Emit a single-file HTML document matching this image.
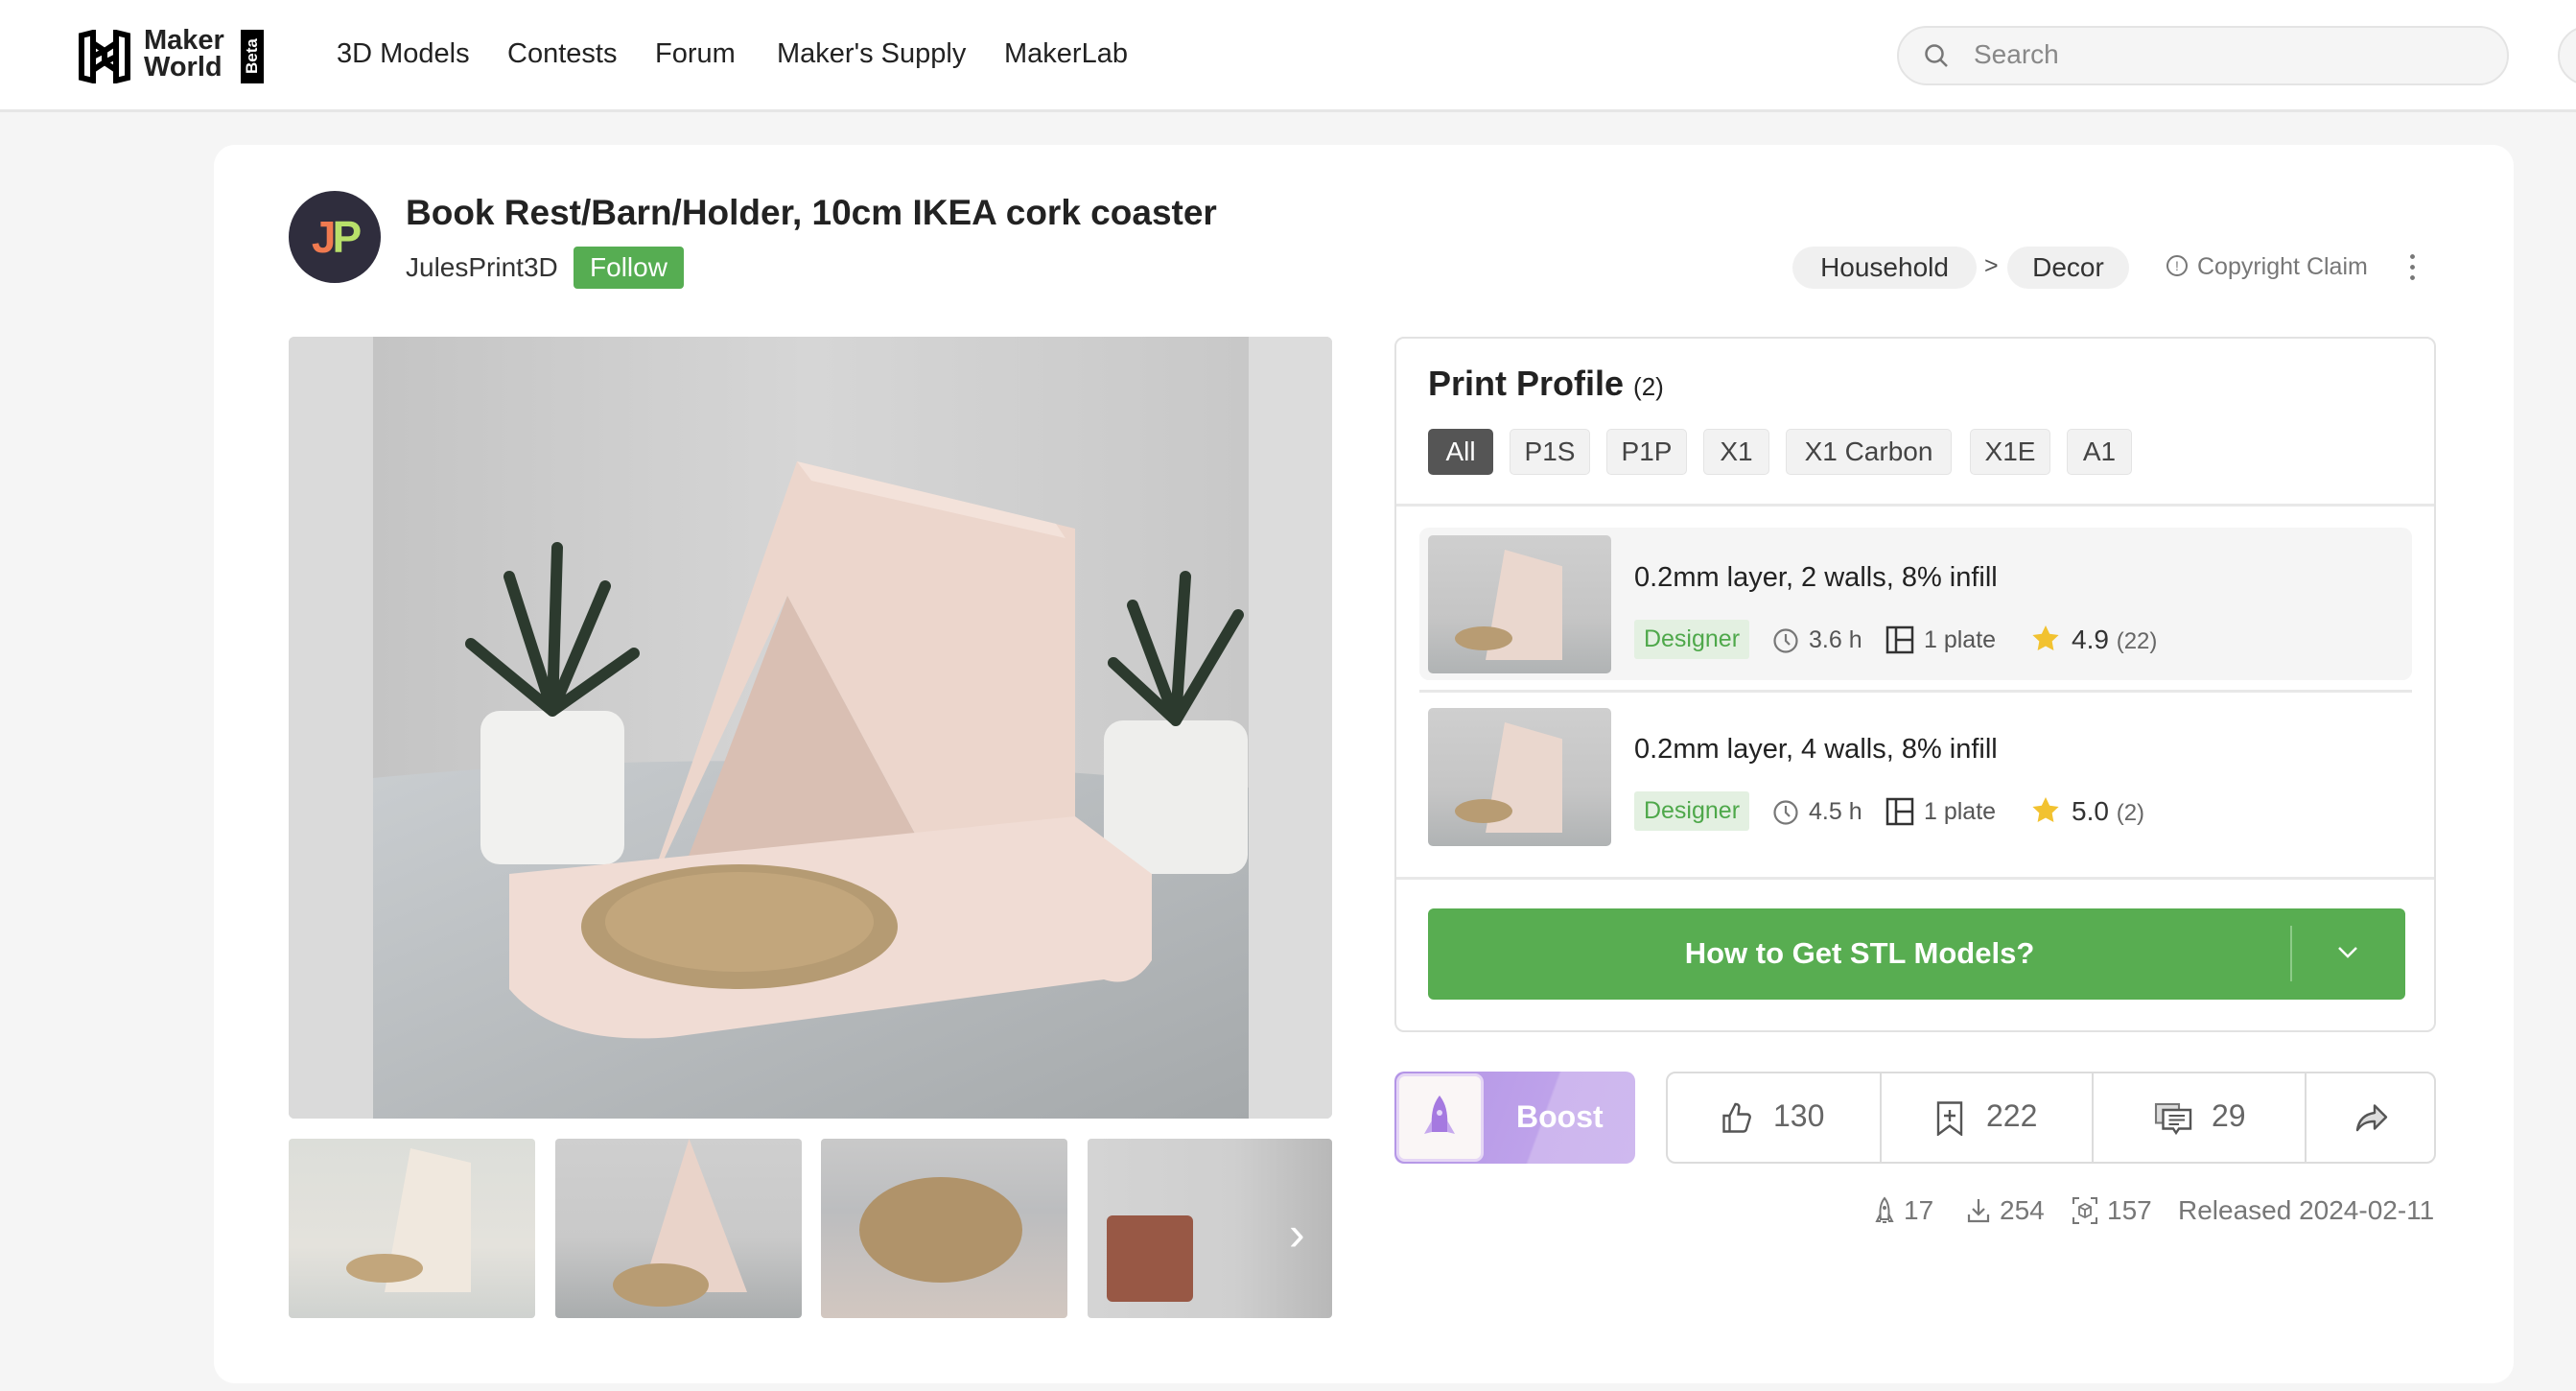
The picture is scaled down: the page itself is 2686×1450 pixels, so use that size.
<!DOCTYPE html>
<html><head><meta charset="utf-8"><style>
*{margin:0;padding:0;box-sizing:border-box}
body{width:2686px;height:1450px;background:#f5f5f5;font-family:"Liberation Sans",sans-serif;color:#222;position:relative;overflow:hidden}
.abs{position:absolute}
.hdr{left:0;top:0;width:2686px;height:117px;background:#fff;border-bottom:3px solid #e6e6e6}
.nav{top:40px;font-size:29px;color:#222}
.card{left:223px;top:151px;width:2398px;height:1291px;background:#fff;border-radius:22px}
.pill{background:#f0f0f0;border-radius:22px;font-size:28px;color:#333;text-align:center;line-height:44px;height:44px}
.tab{top:447px;height:48px;background:#f2f2f2;border:1px solid #e4e4e4;border-radius:5px;font-size:28px;line-height:46px;text-align:center;color:#444}
.meta{font-size:25px;color:#555}
.sep{background:#e8e8e8;height:3px}
.st{top:1246px;font-size:28px;color:#777}
</style></head><body>
<div class="abs hdr"></div>
<svg class="abs" style="left:79px;top:31px" width="60" height="56" viewBox="0 0 60 56"><g fill="none" stroke="#000" stroke-width="6"><path d="M6 6 L18 3 L18 53 L6 50Z M42 3 L54 6 L54 50 L42 53Z"/><path d="M18 14 L30 22 L42 14 M18 42 L30 34 L42 42 M30 22 L30 34 M18 28 L30 22 M42 28 L30 34"/></g></svg>
<div class="abs" style="left:150px;top:28px;font-size:29px;font-weight:bold;line-height:28px">Maker<br>World</div>
<div class="abs" style="left:251px;top:31px;width:24px;height:56px;background:#000;color:#fff;font-size:17px;font-weight:bold;writing-mode:vertical-rl;transform:rotate(180deg);text-align:center;line-height:24px">Beta</div>
<div class="abs nav" style="left:351px">3D Models</div>
<div class="abs nav" style="left:529px">Contests</div>
<div class="abs nav" style="left:683px">Forum</div>
<div class="abs nav" style="left:810px">Maker's Supply</div>
<div class="abs nav" style="left:1047px">MakerLab</div>
<div class="abs" style="left:1978px;top:27px;width:638px;height:62px;background:#f5f5f5;border:2px solid #e4e4e4;border-radius:31px"></div>
<svg class="abs" style="left:2005px;top:44px" width="28" height="28" viewBox="0 0 28 28"><circle cx="12" cy="12" r="8.5" fill="none" stroke="#777" stroke-width="2.5"/><path d="M18 18L25 25" stroke="#777" stroke-width="2.5"/></svg>
<div class="abs" style="left:2058px;top:41px;font-size:28px;color:#888">Search</div>
<div class="abs" style="left:2667px;top:27px;width:62px;height:62px;border:2px solid #e4e4e4;border-radius:31px;background:#f5f5f5"></div>

<div class="abs card"></div>
<div class="abs" style="left:301px;top:199px;width:96px;height:96px;border-radius:50%;background:#2f2d3d;color:#fff;font-size:46px;font-weight:bold;text-align:center;line-height:96px;letter-spacing:-4px"><span style="color:#f07a50">J</span><span style="color:#b8e06a">P</span></div>
<div class="abs" style="left:423px;top:201px;font-size:37px;font-weight:bold;color:#222">Book Rest/Barn/Holder, 10cm IKEA cork coaster</div>
<div class="abs" style="left:423px;top:263px;font-size:28px;color:#333">JulesPrint3D</div>
<div class="abs" style="left:598px;top:257px;width:115px;height:44px;background:#56ad52;border-radius:4px;color:#fff;font-size:28px;text-align:center;line-height:44px">Follow</div>
<div class="abs pill" style="left:1869px;top:257px;width:192px">Household</div>
<div class="abs" style="left:2069px;top:263px;font-size:25px;color:#555">&gt;</div>
<div class="abs pill" style="left:2093px;top:257px;width:127px">Decor</div>
<div class="abs" style="left:2259px;top:266px;width:22px;height:22px;border:2px solid #777;border-radius:50%;font-size:14px;text-align:center;line-height:18px;color:#777">!</div>
<div class="abs" style="left:2291px;top:264px;font-size:25px;color:#777">Copyright Claim</div>
<div class="abs" style="left:2513px;top:262px;width:5px;height:30px;background:radial-gradient(circle,#777 2.2px,transparent 2.6px) 0 0/5px 11px"></div>

<svg class="abs" style="left:301px;top:351px;border-radius:6px" width="1088" height="815" viewBox="0 0 1088 815" preserveAspectRatio="none">
<defs><linearGradient id="w" x1="0" x2="1"><stop offset="0" stop-color="#c4c4c4"/><stop offset=".5" stop-color="#d6d6d6"/><stop offset="1" stop-color="#c8c8c8"/></linearGradient>
<linearGradient id="t" y1="0" y2="1"><stop offset="0" stop-color="#c9cdd0"/><stop offset="1" stop-color="#a5a9ab"/></linearGradient></defs>
<rect width="1088" height="815" fill="#d0d0d0"/>
<rect x="88" width="913" height="815" fill="url(#w)"/>
<rect x="0" width="88" height="815" fill="#dadada"/><rect x="1001" width="87" height="815" fill="#dcdcdc"/>
<path d="M88 460 Q500 420 1001 470 L1001 815 L88 815Z" fill="url(#t)"/>
<rect x="200" y="390" width="150" height="160" rx="20" fill="#f1f1ef"/>
<rect x="850" y="400" width="150" height="160" rx="20" fill="#eeeeec"/>
<g stroke="#2c3a2e" stroke-width="12" stroke-linecap="round"><path d="M275 390 L230 250 M275 390 L280 220 M275 390 L330 260 M275 390 L190 320 M275 390 L360 330"/><path d="M925 400 L880 280 M925 400 L935 250 M925 400 L990 290 M925 400 L860 340"/></g>
<path d="M530 130 L820 200 L820 550 L670 550 L520 270 L370 590 Z" fill="#ecd6cc"/>
<path d="M530 130 L800 195 L810 210 L545 150Z" fill="#f3e2da"/>
<path d="M520 270 L670 550 L410 560Z" fill="#d9bfb3"/>
<path d="M230 560 L820 500 L900 560 L900 650 Q880 680 850 670 L400 730 Q280 740 230 680Z" fill="#f0dcd4"/>
<ellipse cx="470" cy="615" rx="165" ry="65" fill="#b59b73"/><ellipse cx="470" cy="610" rx="140" ry="52" fill="#c2a67c"/>
</svg>
<div class="abs" style="left:301px;top:1187px;width:257px;height:187px;border-radius:4px;background:linear-gradient(180deg,#dcded9 0%,#e4e2dc 60%,#cfd2cf 100%)"><div style="position:absolute;left:100px;top:10px;width:90px;height:150px;background:#f0e8de;clip-path:polygon(30% 0,100% 10%,100% 100%,0 100%)"></div><div style="position:absolute;left:60px;top:120px;width:80px;height:30px;border-radius:50%;background:#c2a67c"></div></div>
<div class="abs" style="left:579px;top:1187px;width:257px;height:187px;border-radius:4px;background:linear-gradient(180deg,#cfcfcf 0%,#c9c9c9 55%,#a9acad 100%)"><div style="position:absolute;left:90px;top:0;width:110px;height:160px;background:#e9d3c9;clip-path:polygon(45% 0,100% 100%,0 100%)"></div><div style="position:absolute;left:60px;top:130px;width:100px;height:45px;border-radius:50%;background:#b89c73"></div></div>
<div class="abs" style="left:856px;top:1187px;width:257px;height:187px;border-radius:4px;background:linear-gradient(180deg,#c9c9c9 0%,#bcbdbf 40%,#d2c7c0 100%)"><div style="position:absolute;left:40px;top:40px;width:170px;height:110px;border-radius:50%;background:#b0936a"></div></div>
<div class="abs" style="left:1134px;top:1187px;width:255px;height:187px;border-radius:4px;background:linear-gradient(90deg,#d4d4d4 0%,#cfcfcf 60%,#b8b8b8 100%)"><div style="position:absolute;left:20px;top:80px;width:90px;height:90px;background:#8a3a22;border-radius:6px;opacity:.8"></div><div style="position:absolute;left:210px;top:70px;color:#fff;font-size:50px">›</div></div>

<div class="abs" style="left:1454px;top:351px;width:1086px;height:725px;border:2px solid #e2e2e2;border-radius:10px"></div>
<div class="abs" style="left:1489px;top:379px;font-size:36px;font-weight:bold">Print Profile <span style="font-size:26px;font-weight:normal">(2)</span></div>
<div class="abs tab" style="left:1489px;width:68px;background:#555;color:#fff;border-color:#555">All</div>
<div class="abs tab" style="left:1574px;width:84px">P1S</div>
<div class="abs tab" style="left:1675px;width:84px">P1P</div>
<div class="abs tab" style="left:1776px;width:69px">X1</div>
<div class="abs tab" style="left:1862px;width:173px">X1 Carbon</div>
<div class="abs tab" style="left:2054px;width:84px">X1E</div>
<div class="abs tab" style="left:2155px;width:68px">A1</div>
<div class="abs sep" style="left:1456px;top:525px;width:1082px"></div>
<div class="abs" style="left:1480px;top:550px;width:1035px;height:159px;background:#f5f5f5;border-radius:10px"></div>
<div class="abs sep" style="left:1480px;top:719px;width:1035px"></div>
<div class="abs sep" style="left:1456px;top:914px;width:1082px"></div>

<div class="abs" style="left:1489px;top:558px;width:191px;height:144px;border-radius:5px;background:linear-gradient(180deg,#cfcfcf,#c5c5c5 60%,#b0b3b4)"><div style="position:absolute;left:60px;top:15px;width:80px;height:115px;background:#ead7ce;clip-path:polygon(25% 0,100% 15%,100% 100%,0 100%)"></div><div style="position:absolute;left:28px;top:95px;width:60px;height:25px;border-radius:50%;background:#b89c73"></div></div>
<div class="abs" style="left:1489px;top:738px;width:191px;height:144px;border-radius:5px;background:linear-gradient(180deg,#cfcfcf,#c5c5c5 60%,#b0b3b4)"><div style="position:absolute;left:60px;top:15px;width:80px;height:115px;background:#ead7ce;clip-path:polygon(25% 0,100% 15%,100% 100%,0 100%)"></div><div style="position:absolute;left:28px;top:95px;width:60px;height:25px;border-radius:50%;background:#b89c73"></div></div>

<div class="abs" style="left:1704px;top:586px;font-size:29px;color:#222">0.2mm layer, 2 walls, 8% infill</div>
<div class="abs" style="left:1704px;top:765px;font-size:29px;color:#222">0.2mm layer, 4 walls, 8% infill</div>
<div class="abs" style="left:1704px;top:646px;width:120px;height:41px;background:#e3f0e1;border-radius:3px;color:#4ea84a;font-size:25px;text-align:center;line-height:41px">Designer</div>
<div class="abs" style="left:1704px;top:825px;width:120px;height:41px;background:#e3f0e1;border-radius:3px;color:#4ea84a;font-size:25px;text-align:center;line-height:41px">Designer</div>
<svg class="abs" style="left:1848px;top:652px" width="28" height="30"><circle cx="14" cy="16" r="11.5" fill="none" stroke="#777" stroke-width="2.2"/><path d="M14 9V16L18 20" fill="none" stroke="#777" stroke-width="2.2"/></svg>
<svg class="abs" style="left:1848px;top:831px" width="28" height="30"><circle cx="14" cy="16" r="11.5" fill="none" stroke="#777" stroke-width="2.2"/><path d="M14 9V16L18 20" fill="none" stroke="#777" stroke-width="2.2"/></svg>
<div class="abs meta" style="left:1886px;top:653px">3.6 h</div>
<div class="abs meta" style="left:1886px;top:832px">4.5 h</div>
<svg class="abs" style="left:1966px;top:652px" width="30" height="30"><rect x="2" y="2" width="26" height="26" fill="none" stroke="#333" stroke-width="2.5"/><path d="M11 2V28M11 15H28" stroke="#333" stroke-width="2.5"/></svg>
<svg class="abs" style="left:1966px;top:831px" width="30" height="30"><rect x="2" y="2" width="26" height="26" fill="none" stroke="#333" stroke-width="2.5"/><path d="M11 2V28M11 15H28" stroke="#333" stroke-width="2.5"/></svg>
<div class="abs meta" style="left:2006px;top:653px">1 plate</div>
<div class="abs meta" style="left:2006px;top:832px">1 plate</div>
<svg class="abs" style="left:2117px;top:650px" width="32" height="32" viewBox="0 0 24 24"><path d="M12 1.5l3.1 6.6 7.1.9-5.2 4.9 1.3 7.1L12 17.6 5.7 21l1.3-7.1L1.8 9l7.1-.9z" fill="#f2c230"/></svg>
<svg class="abs" style="left:2117px;top:829px" width="32" height="32" viewBox="0 0 24 24"><path d="M12 1.5l3.1 6.6 7.1.9-5.2 4.9 1.3 7.1L12 17.6 5.7 21l1.3-7.1L1.8 9l7.1-.9z" fill="#f2c230"/></svg>
<div class="abs" style="left:2160px;top:651px;font-size:28px;color:#333">4.9 <span style="font-size:24px;color:#666">(22)</span></div>
<div class="abs" style="left:2160px;top:830px;font-size:28px;color:#333">5.0 <span style="font-size:24px;color:#666">(2)</span></div>

<div class="abs" style="left:1489px;top:947px;width:1019px;height:95px;background:#58ad51;border-radius:6px"></div>
<div class="abs" style="left:1489px;top:976px;width:900px;text-align:center;color:#fff;font-size:31px;font-weight:bold">How to Get STL Models?</div>
<div class="abs" style="left:2388px;top:965px;width:2px;height:58px;background:#8dcb88"></div>
<svg class="abs" style="left:2436px;top:985px" width="24" height="16"><path d="M3 3L12 12L21 3" fill="none" stroke="#fff" stroke-width="2.5"/></svg>

<div class="abs" style="left:1454px;top:1117px;width:251px;height:96px;border-radius:10px;background:linear-gradient(110deg,#b394e6 0%,#bea2ea 60%,#cdb6ee 61%,#cfb9ef 100%)"></div>
<div class="abs" style="left:1456px;top:1119px;width:91px;height:92px;border-radius:9px;background:#faf6f6;border:3px solid #e5d6f5"></div>
<svg class="abs" style="left:1480px;top:1140px" width="42" height="50" viewBox="0 0 42 50"><path d="M21 2C29 12 30 24 29 40H13C12 24 13 12 21 2Z" fill="#a579e0"/><path d="M13 28L5 42L13 40ZM29 28L37 42L29 40Z" fill="#c6a9ee"/><circle cx="21" cy="20" r="3" fill="#e6dafa"/></svg>
<div class="abs" style="left:1581px;top:1146px;color:#fff;font-size:32px;font-weight:bold">Boost</div>
<div class="abs" style="left:1737px;top:1117px;width:803px;height:96px;border:2px solid #dcdcdc;border-radius:10px"></div>
<div class="abs" style="left:1960px;top:1119px;width:2px;height:92px;background:#dcdcdc"></div>
<div class="abs" style="left:2181px;top:1119px;width:2px;height:92px;background:#dcdcdc"></div>
<div class="abs" style="left:2403px;top:1119px;width:2px;height:92px;background:#dcdcdc"></div>
<svg class="abs" style="left:1793px;top:1148px" width="36" height="36" viewBox="0 0 24 24"><path d="M7 10v11H3V10zM7 10l4-8c2 0 3 1 2.5 3L13 9h6c1.5 0 2.5 1.3 2 2.7l-2.5 8c-.3.8-1 1.3-1.9 1.3H7" fill="none" stroke="#555" stroke-width="1.6"/></svg>
<div class="abs" style="left:1849px;top:1145px;font-size:32px;color:#666">130</div>
<svg class="abs" style="left:2018px;top:1148px" width="30" height="36" viewBox="0 0 20 24"><path d="M2 1h16v22l-8-6-8 6z" fill="none" stroke="#555" stroke-width="1.6"/><path d="M10 6v8M6 10h8" stroke="#555" stroke-width="1.6"/></svg>
<div class="abs" style="left:2071px;top:1145px;font-size:32px;color:#666">222</div>
<svg class="abs" style="left:2246px;top:1148px" width="40" height="36" viewBox="0 0 26 24"><rect x="1" y="2" width="16" height="13" fill="#ddd" stroke="#777" stroke-width="1.4"/><path d="M6 6h19v13h-8l-2 3-2-3H6z" fill="#fff" stroke="#555" stroke-width="1.6"/><path d="M10 10h11M10 13h11M10 16h7" stroke="#555" stroke-width="1.3"/></svg>
<div class="abs" style="left:2306px;top:1145px;font-size:32px;color:#666">29</div>
<svg class="abs" style="left:2455px;top:1148px" width="36" height="36" viewBox="0 0 24 24"><path d="M14 3l8 8-8 8v-5c-6 0-9 2-12 6 1-7 5-11 12-12z" fill="#ddd" stroke="#555" stroke-width="1.6" stroke-linejoin="round"/></svg>

<svg class="abs" style="left:1953px;top:1247px" width="24" height="30" viewBox="0 0 24 30"><path d="M12 2C17 8 17 16 16 24H8C7 16 7 8 12 2Z M8 18L4 26H8 M16 18L20 26H16 M10 27h4" fill="none" stroke="#777" stroke-width="2"/><circle cx="12" cy="12" r="2" fill="#777"/></svg>
<div class="abs st" style="left:1985px">17</div>
<svg class="abs" style="left:2050px;top:1248px" width="26" height="28" viewBox="0 0 26 28"><path d="M13 2V18M7 12L13 18L19 12M3 18V25H23V18" fill="none" stroke="#777" stroke-width="2.2"/></svg>
<div class="abs st" style="left:2085px">254</div>
<svg class="abs" style="left:2160px;top:1247px" width="28" height="30" viewBox="0 0 28 30"><path d="M2 8V2H8M20 2H26V8M26 22V28H20M8 28H2V22" fill="none" stroke="#777" stroke-width="2"/><path d="M14 8L20 11V19L14 22L8 19V11Z M8 11L14 14L20 11M14 14V22" fill="none" stroke="#777" stroke-width="1.8"/></svg>
<div class="abs st" style="left:2197px">157</div>
<div class="abs st" style="left:2271px">Released 2024-02-11</div>
</body></html>
